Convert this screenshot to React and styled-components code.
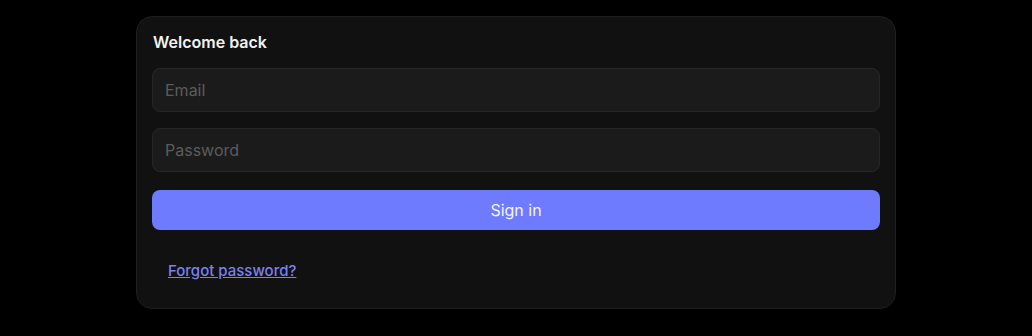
import React from "react";
import styled, { createGlobalStyle } from "styled-components";

const GlobalStyle = createGlobalStyle`
  * { box-sizing: border-box; }
  body {
    margin: 0;
    background: #000;
    font-family: Inter, "Liberation Sans", sans-serif;
    -webkit-font-smoothing: antialiased;
  }
`;

const Page = styled.div`
  display: flex;
  justify-content: center;
  padding: 16px 0;
`;

const Card = styled.form`
  width: 760px;
  display: flex;
  flex-direction: column;
  padding: 16px 15px 15px;
  background: #111111;
  border: 1px solid #1e1e1e;
  border-radius: 16px;
`;

const Title = styled.h2`
  margin: 0 0 16px 1px;
  font-size: 16px;
  line-height: 19px;
  font-weight: 600;
  color: #f2f2f2;
`;

const Input = styled.input`
  height: 44px;
  margin-bottom: ${(p) => p.$gap || 16}px;
  padding: 0 12px;
  background: #1b1b1b;
  border: 1px solid #262626;
  border-radius: 8px;
  color: #eee;
  font: inherit;
  font-size: 16px;
  outline: none;

  &::placeholder {
    color: #5c5c5c;
  }
`;

const Button = styled.button`
  height: 40px;
  border: none;
  border-radius: 8px;
  background: #6e7bff;
  color: #f4f5ff;
  font: inherit;
  font-size: 16px;
  cursor: pointer;
`;

const Link = styled.a`
  align-self: flex-start;
  margin-top: 26px;
  padding: 4px 16px 11px;
  font-size: 15px;
  font-weight: 500;
  line-height: 22px;
  color: #7a80f2;
  text-decoration: underline;
  cursor: pointer;
`;

export default function App() {
  return (
    <>
      <GlobalStyle />
      <Page>
        <Card onSubmit={(e) => e.preventDefault()}>
          <Title>Welcome back</Title>
          <Input type="email" placeholder="Email" />
          <Input type="password" placeholder="Password" $gap={18} />
          <Button type="submit">Sign in</Button>
          <Link>Forgot password?</Link>
        </Card>
      </Page>
    </>
  );
}
